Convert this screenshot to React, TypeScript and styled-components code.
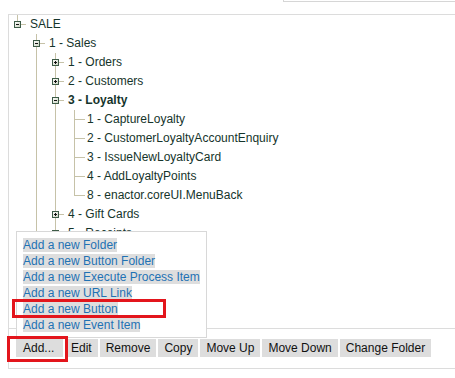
import { createGlobalStyle } from 'styled-components'
import styled from 'styled-components'

type Kind = 'plus' | 'minus' | 'leaf'

type Row = {
  label: string
  guides: boolean[]
  kind: Kind
  last: boolean
  bold?: boolean
}

const rows: Row[] = [
  { label: 'SALE', guides: [], kind: 'minus', last: true },
  { label: '1 - Sales', guides: [false], kind: 'minus', last: false },
  { label: '1 - Orders', guides: [false, true], kind: 'plus', last: false },
  { label: '2 - Customers', guides: [false, true], kind: 'plus', last: false },
  { label: '3 - Loyalty', guides: [false, true], kind: 'minus', last: false, bold: true },
  { label: '1 - CaptureLoyalty', guides: [false, true, true], kind: 'leaf', last: false },
  { label: '2 - CustomerLoyaltyAccountEnquiry', guides: [false, true, true], kind: 'leaf', last: false },
  { label: '3 - IssueNewLoyaltyCard', guides: [false, true, true], kind: 'leaf', last: false },
  { label: '4 - AddLoyaltyPoints', guides: [false, true, true], kind: 'leaf', last: false },
  { label: '8 - enactor.coreUI.MenuBack', guides: [false, true, true], kind: 'leaf', last: true },
  { label: '4 - Gift Cards', guides: [false, true], kind: 'plus', last: false },
  { label: '5 - Receipts', guides: [false, true], kind: 'plus', last: false },
]

const menuItems = [
  'Add a new Folder',
  'Add a new Button Folder',
  'Add a new Execute Process Item',
  'Add a new URL Link',
  'Add a new Button',
  'Add a new Event Item',
]

const buttons = ['Edit', 'Remove', 'Copy', 'Move Up', 'Move Down', 'Change Folder']

function ToggleIcon({ open }: { open: boolean }) {
  return (
    <svg width="9" height="9" viewBox="0 0 9 9">
      <defs>
        <linearGradient id="tg" x1="0" y1="0" x2="1" y2="1">
          <stop offset="0" stopColor="#ffffff" />
          <stop offset="1" stopColor="#c9d2bf" />
        </linearGradient>
      </defs>
      <rect x="1.5" y="1.5" width="6" height="6" fill="url(#tg)" stroke="#3d5b47" />
      <path d="M3 4.5h3" stroke="#111" />
      {!open && <path d="M4.5 3v3" stroke="#111" />}
    </svg>
  )
}

export default function App() {
  return (
    <>
      <GlobalStyle />
      <Page>
        <TopStrip>
          <TopBox />
        </TopStrip>
        <Panel>
          <Tree>
            {rows.map((r) => (
              <TreeRow key={r.label}>
                {r.guides.map((g, i) => (
                  <Guide key={i} $line={g} />
                ))}
                <NodeCell $last={r.last} $leaf={r.kind === 'leaf'}>
                  {r.kind !== 'leaf' && <ToggleIcon open={r.kind === 'minus'} />}
                </NodeCell>
                <Label $bold={!!r.bold}>{r.label}</Label>
              </TreeRow>
            ))}
          </Tree>
          <ButtonBar>
            <AddButton>Add...</AddButton>
            {buttons.map((b) => (
              <BarButton key={b}>{b}</BarButton>
            ))}
          </ButtonBar>

          <Menu>
            {menuItems.map((m) => (
              <MenuItem key={m}>
                <span>{m}</span>
              </MenuItem>
            ))}
          </Menu>
          <Highlight $left={3} $top={284} $w={154} $h={19} />
          <Highlight $left={-2} $top={321} $w={61} $h={26} />
        </Panel>
      </Page>
    </>
  )
}

const GlobalStyle = createGlobalStyle`
  html, body {
    margin: 0;
    background: #fff;
    overflow: hidden;
  }
  body {
    font-family: "Liberation Sans", Arial, sans-serif;
    font-size: 12px;
  }
`

const Page = styled.div`
  padding-left: 8px;
  width: 447px;
`

const TopStrip = styled.div`
  height: 2px;
  display: flex;
`

const TopBox = styled.div`
  margin-left: 275px;
  flex: 1;
  border-left: 1px solid #d6d6d6;
  border-bottom: 1px solid #d6d6d6;
`

const Panel = styled.div`
  position: relative;
  margin-top: 12px;
  border-top: 1px solid #dcdcdc;
  border-left: 1px solid #dcdcdc;
  border-bottom: 1px solid #dcdcdc;
`

const Tree = styled.div`
  height: 313px;
  overflow: hidden;
  border-bottom: 1px solid #dcdcdc;
  color: #15342b;
`

const TreeRow = styled.div`
  display: flex;
  height: 19px;
  line-height: 19px;
`

const Guide = styled.div<{ $line: boolean }>`
  width: 19px;
  flex: none;
  position: relative;
  ${(p) =>
    p.$line
      ? `&::before {
    content: '';
    position: absolute;
    left: 8px;
    top: 0;
    bottom: 0;
    width: 1px;
    background: #c6c2a8;
  }`
      : ''}
`

const NodeCell = styled.div<{ $last: boolean; $leaf: boolean }>`
  width: 19px;
  flex: none;
  position: relative;
  display: flex;
  align-items: center;
  padding-left: 4px;
  box-sizing: border-box;

  &::before {
    content: '';
    position: absolute;
    left: 8px;
    top: 0;
    width: 1px;
    height: ${(p) => (p.$last ? '10px' : '19px')};
    background: #c6c2a8;
  }
  &::after {
    content: '';
    position: absolute;
    left: ${(p) => (p.$leaf ? '8px' : '12px')};
    right: ${(p) => (p.$leaf ? '0' : '2px')};
    top: 9px;
    height: 1px;
    background: #c6c2a8;
  }
  svg {
    position: relative;
    z-index: 1;
    display: block;
  }
`

const Label = styled.span<{ $bold: boolean }>`
  padding-left: 2px;
  white-space: nowrap;
  font-weight: ${(p) => (p.$bold ? 'bold' : 'normal')};
`

const ButtonBar = styled.div`
  display: flex;
  gap: 2px;
  height: 39px;
  padding: 10px 0 0 7px;
  box-sizing: border-box;
`

const BarButton = styled.button`
  height: 18px;
  padding: 0 6px;
  border: none;
  background: #dddddd;
  color: #111;
  font-family: "Liberation Sans", Arial, sans-serif;
  font-size: 12px;
  line-height: 18px;
  white-space: nowrap;
`

const AddButton = styled(BarButton)`
  width: 47px;
  padding: 0 0 0 7px;
  text-align: left;
`

const Menu = styled.div`
  position: absolute;
  left: 7px;
  top: 216px;
  width: 191px;
  height: 107px;
  box-sizing: border-box;
  padding: 5px 0 0 6px;
  background: #fff;
  border: 1px solid #d8d8d8;
  z-index: 2;
`

const MenuItem = styled.div`
  height: 16px;
  line-height: 16px;
  white-space: nowrap;
  color: #1f72b4;

  span {
    background: #dedede;
  }
`

const Highlight = styled.div<{ $left: number; $top: number; $w: number; $h: number }>`
  position: absolute;
  left: ${(p) => p.$left}px;
  top: ${(p) => p.$top}px;
  width: ${(p) => p.$w}px;
  height: ${(p) => p.$h}px;
  box-sizing: border-box;
  border: 3px solid #e3151c;
  z-index: 3;
`
